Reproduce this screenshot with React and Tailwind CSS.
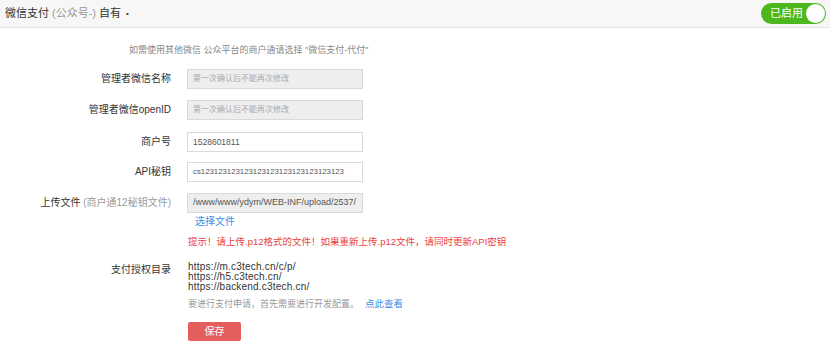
import React from 'react'

const font = { fontFamily: '"Liberation Sans", "Noto Sans CJK SC", sans-serif' }

const Row = ({ label, children, className = '' }) => (
  <div className={`flex items-center ${className}`}>
    <div className="w-[171px] shrink-0 text-right text-[10px] text-[#333] leading-[12px]">{label}</div>
    <div className="ml-[16px]">{children}</div>
  </div>
)

const Input = ({ value, placeholder, disabled, valueClass = 'text-[8px]' }) => (
  <div
    className={`w-[176px] h-[20px] border border-[#d9d9d9] flex items-center px-[5px] overflow-hidden whitespace-nowrap ${
      disabled ? 'bg-[#eeeeee]' : 'bg-white'
    }`}
  >
    {value ? (
      <span className={`${valueClass} text-[#555]`}>{value}</span>
    ) : (
      <span className="text-[8px] text-[#aaa]">{placeholder}</span>
    )}
  </div>
)

const App = () => {
  return (
    <div className="w-[830px] h-[349px] bg-white overflow-hidden" style={font}>
      <div className="h-[28px] bg-[#f7f7f7] border-b border-[#e6e6e6] flex items-center justify-between pl-[5px] pr-[4px]">
        <div className="text-[11px] text-[#333] flex items-center">
          <span>微信支付</span>
          <span className="text-[#999] ml-[3px]">(公众号-)</span>
          <span className="ml-[3px]">自有</span>
          <span className="ml-[5px] text-[8px]">•</span>
        </div>
        <div className="w-[65px] h-[21px] rounded-full bg-[#4cb81e] flex items-center justify-between pl-[9px] pr-[1px]">
          <span className="text-[11px] text-white">已启用</span>
          <span className="w-[19px] h-[19px] rounded-full bg-white block"></span>
        </div>
      </div>

      <div className="mt-[16px] pl-[129px] text-[9px] text-[#888] leading-[12px]">
        如需使用其他微信 公众平台的商户通请选择 "微信支付-代付"
      </div>

      <Row label="管理者微信名称" className="mt-[13px]">
        <Input placeholder="第一次确认后不能再次修改" disabled />
      </Row>
      <Row label="管理者微信openID" className="mt-[11px]">
        <Input placeholder="第一次确认后不能再次修改" disabled />
      </Row>
      <Row label="商户号" className="mt-[12px]">
        <Input value="1528601811" valueClass="text-[8.5px]" />
      </Row>
      <Row label="API秘钥" className="mt-[10px]">
        <Input value="cs123123123123123123123123123123123" valueClass="text-[7.8px]" />
      </Row>
      <Row
        label={
          <>
            上传文件 <span className="text-[#999]">(商户通12秘钥文件)</span>
          </>
        }
        className="mt-[11px]"
      >
        <Input value="/www/www/ydym/WEB-INF/upload/2537/" valueClass="text-[9px]" disabled />
      </Row>

      <div className="mt-[3px] pl-[195px] text-[10px] text-[#3a8ee6] leading-[12px]">选择文件</div>

      <div className="mt-[8px] pl-[188px] text-[9.5px] text-[#e8413f] leading-[12px] whitespace-nowrap">
        提示！请上传.p12格式的文件！如果重新上传.p12文件，请同时更新API密钥
      </div>

      <div className="mt-[14px] flex items-start">
        <div className="w-[171px] shrink-0 text-right text-[10px] text-[#333] leading-[12px] mt-[2px]">支付授权目录</div>
        <div className="ml-[17px] text-[10px] tracking-[0.2px] text-[#333] leading-[10px]">
          <div>https://m.c3tech.cn/c/p/</div>
          <div>https://h5.c3tech.cn/</div>
          <div>https://backend.c3tech.cn/</div>
        </div>
      </div>

      <div className="mt-[6px] pl-[188px] text-[9px] text-[#999] leading-[12px] whitespace-nowrap">
        要进行支付申请，首先需要进行开发配置。
        <span className="ml-[6px] text-[#3a8ee6] text-[9.5px]">点此查看</span>
      </div>

      <div className="mt-[12px] ml-[188px] w-[53px] h-[19px] bg-[#e55e5e] rounded-[2px] flex items-center justify-center text-[10px] text-white">
        保存
      </div>
    </div>
  )
}

export default App
